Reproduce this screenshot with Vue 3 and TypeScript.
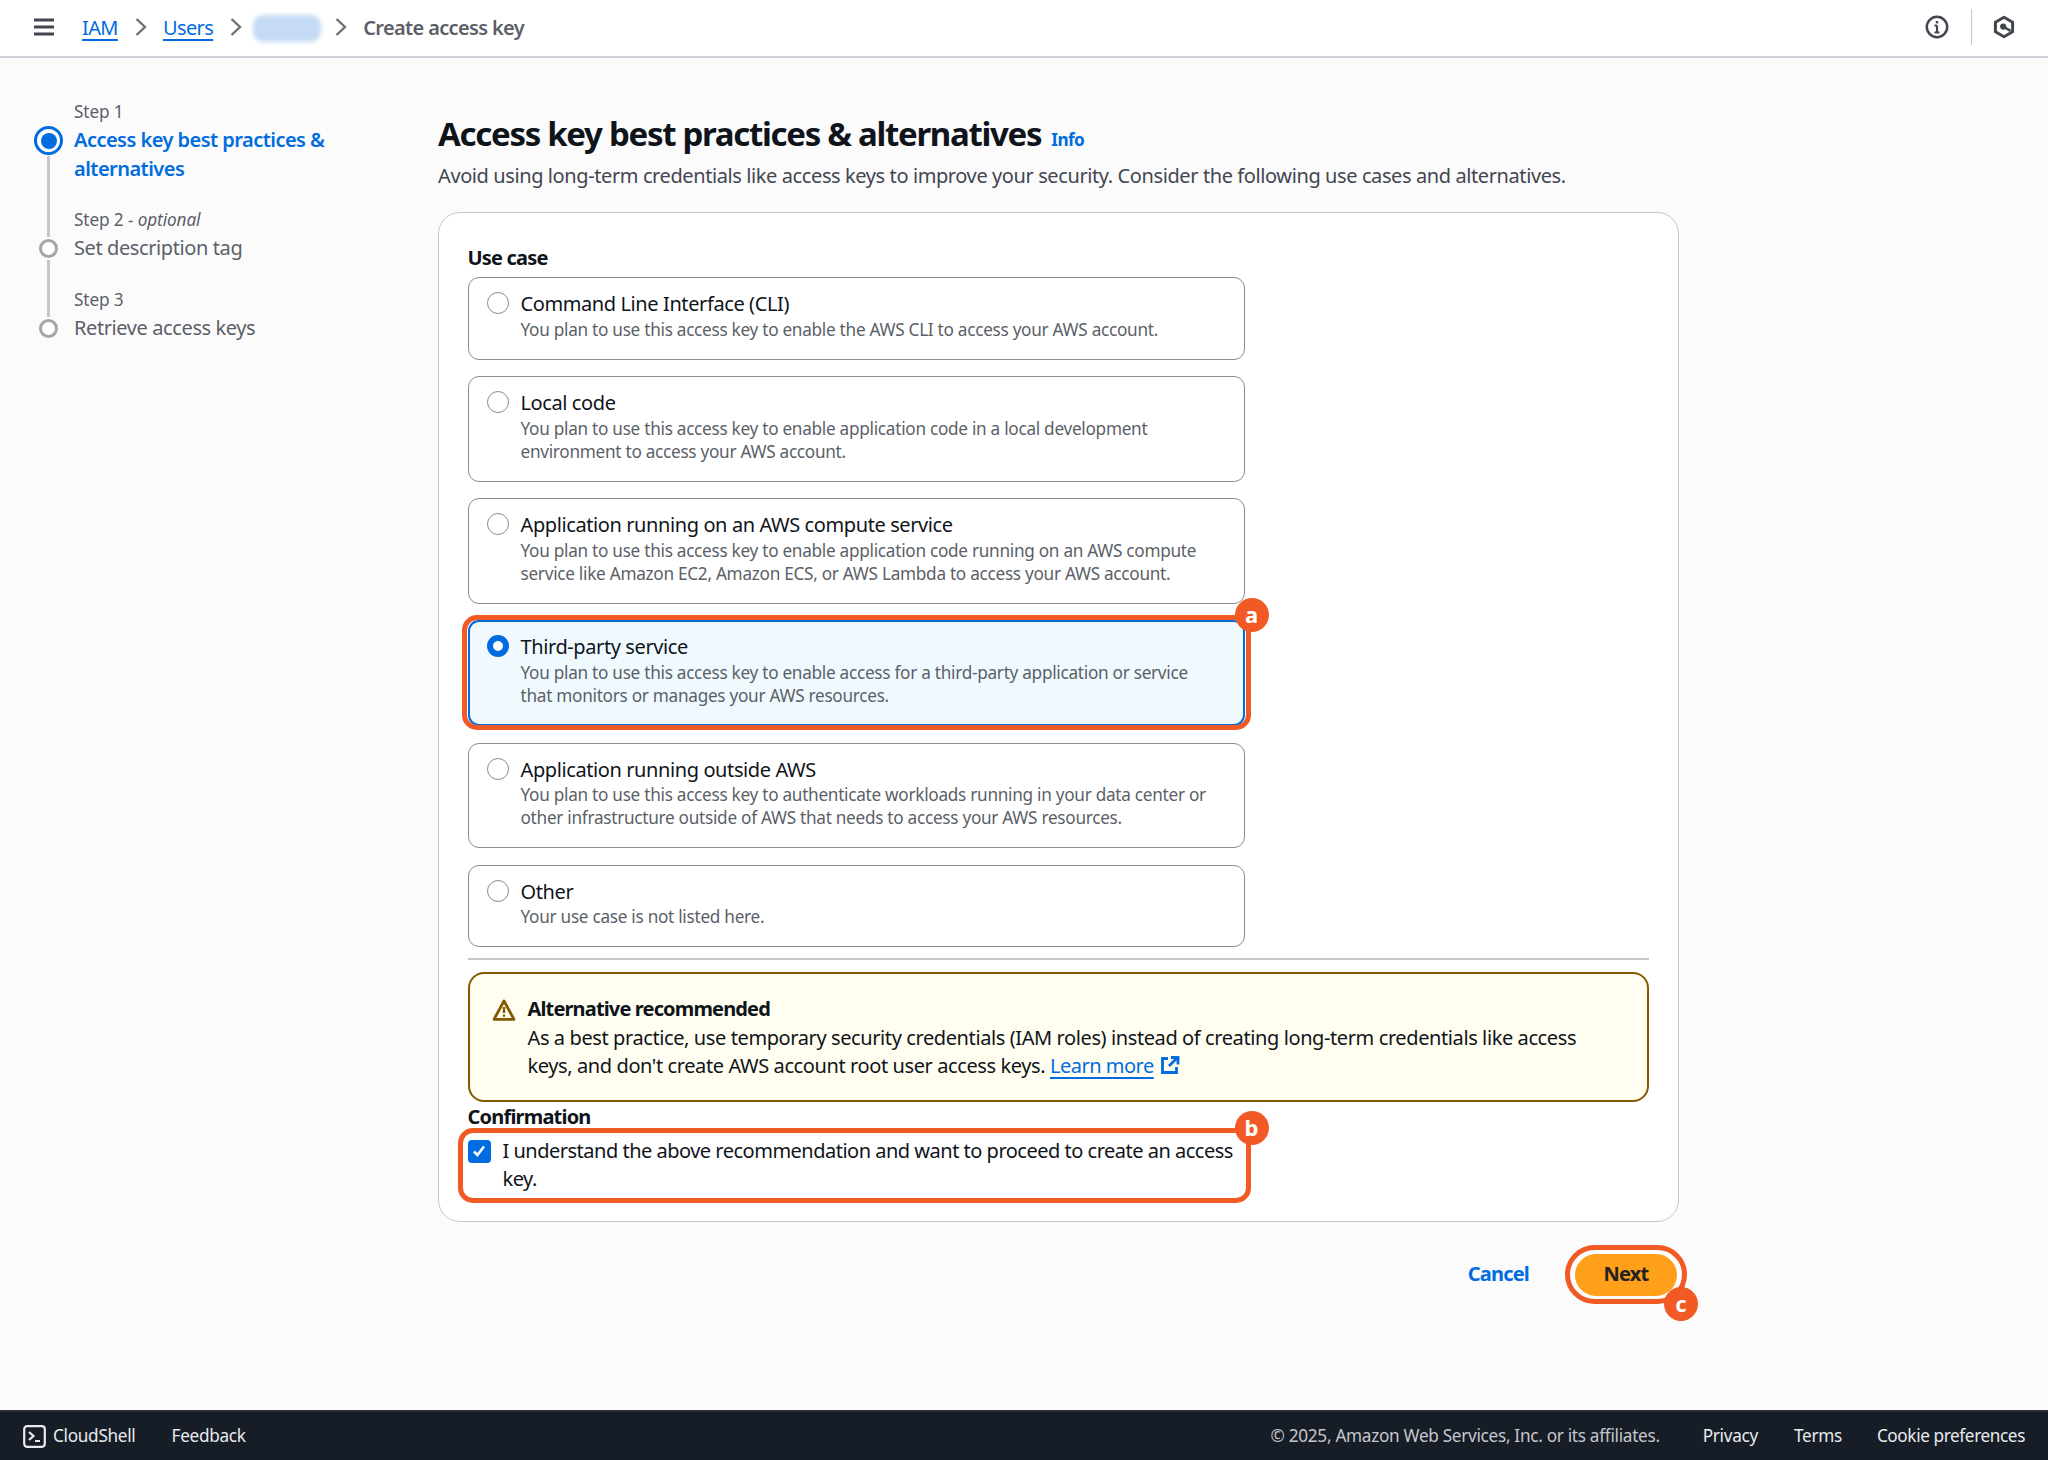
<template>
  <div class="page">
    <header class="topbar">
      <button class="menu" aria-label="Menu">
        <svg width="22" height="18" viewBox="0 0 22 18"><path d="M1 2h20M1 9h20M1 16h20" stroke="#424650" stroke-width="2.8" fill="none" /></svg>
      </button>
      <nav class="crumbs">
        <a class="crumb-link">IAM</a>
        <svg class="chev" width="14" height="20" viewBox="0 0 14 20"><path d="M2.5 2l8.5 8-8.5 8" stroke="#6b6f78" stroke-width="2.4" fill="none" /></svg>
        <a class="crumb-link">Users</a>
        <svg class="chev" width="14" height="20" viewBox="0 0 14 20"><path d="M2.5 2l8.5 8-8.5 8" stroke="#6b6f78" stroke-width="2.4" fill="none" /></svg>
        <span class="blurred"></span>
        <svg class="chev" width="14" height="20" viewBox="0 0 14 20"><path d="M2.5 2l8.5 8-8.5 8" stroke="#6b6f78" stroke-width="2.4" fill="none" /></svg>
        <span class="crumb-current">Create access key</span>
      </nav>
      <div class="top-icons">
        <svg width="24" height="24" viewBox="0 0 24 24">
          <circle cx="12" cy="12" r="10.2" stroke="#424650" stroke-width="2.5" fill="none" />
          <path d="M12 10.5v7M9.5 17.5h5M9.5 10.5H12" stroke="#424650" stroke-width="2.2" fill="none" />
          <path d="M10.8 6h2.4v2.4h-2.4z" fill="#424650" />
        </svg>
        <span class="top-sep"></span>
        <svg width="24" height="24" viewBox="0 0 24 24">
          <path d="M12 2.2l8.6 5v9.6l-8.6 5-8.6-5V7.2z" stroke="#424650" stroke-width="3" fill="none" stroke-linejoin="round" />
          <circle cx="11.2" cy="11.6" r="3.1" fill="#424650" />
          <path d="M12 12l6.5 3.8" stroke="#424650" stroke-width="2.6" fill="none" />
        </svg>
      </div>
    </header>

    <main class="main">
      <aside class="steps">
        <div v-for="(s, i) in steps" :key="s.title" class="step" :class="{ active: i === 0, last: i === steps.length - 1 }">
          <div class="step-label">{{ s.label }}<i v-if="s.optional"> - optional</i></div>
          <div class="step-row">
            <span class="step-dot"></span>
            <span class="step-title">{{ s.title }}</span>
          </div>
        </div>
      </aside>

      <section class="content">
        <div class="title-row">
          <h1>Access key best practices &amp; alternatives</h1>
          <a class="info">Info</a>
        </div>
        <p class="subtitle">Avoid using long-term credentials like access keys to improve your security. Consider the following use cases and alternatives.</p>

        <div class="card">
          <div class="field-label">Use case</div>
          <div class="options">
            <div v-for="o in options" :key="o.title" class="option-wrap">
              <div class="option" :class="{ selected: o.selected }">
                <span class="radio"></span>
                <div>
                  <div class="option-title">{{ o.title }}</div>
                  <div class="option-desc">{{ o.desc }}</div>
                </div>
              </div>
              <template v-if="o.selected">
                <span class="mark mark-a"></span>
                <span class="badge badge-a">a</span>
              </template>
            </div>
          </div>
          <div class="divider"></div>

          <div class="alert">
            <svg class="alert-icon" width="24" height="24" viewBox="0 0 24 24">
              <path d="M12 3L22 21.3H2z" stroke="#855900" stroke-width="2.8" fill="none" stroke-linejoin="round" />
              <path d="M12 9v6M12 16.4v2.4" stroke="#855900" stroke-width="2.4" fill="none" />
            </svg>
            <div>
              <div class="alert-title">Alternative recommended</div>
              <div class="alert-text">As a best practice, use temporary security credentials (IAM roles) instead of creating long-term credentials like access keys, and don't create AWS account root user access keys. <a class="learn">Learn more</a><svg class="ext" width="20" height="20" viewBox="0 0 20 20"><path d="M8 3.5H2.5v14h14V12" stroke="#006ce0" stroke-width="2.8" fill="none" /><path d="M9 11l8-8M11 2.5h7v7" stroke="#006ce0" stroke-width="2.8" fill="none" /></svg></div>
            </div>
          </div>

          <div class="confirm-label">Confirmation</div>
          <div class="confirm">
            <span class="checkbox">
              <svg width="16" height="16" viewBox="0 0 16 16"><path d="M3 8.5l3.4 3.6L13 3.5" stroke="#fff" stroke-width="2.6" fill="none" /></svg>
            </span>
            <span class="confirm-text">I understand the above recommendation and want to proceed to create an access key.</span>
            <span class="mark mark-b"></span>
            <span class="badge badge-b">b</span>
          </div>
        </div>

        <div class="actions">
          <a class="cancel">Cancel</a>
          <div class="next-wrap">
            <button class="next">Next</button>
            <span class="mark mark-c"></span>
            <span class="badge badge-c">c</span>
          </div>
        </div>
      </section>
    </main>

    <footer class="footer">
      <div class="foot-left">
        <span class="shell">
          <svg width="23" height="23" viewBox="0 0 23 23">
            <rect x="1.2" y="1.2" width="20.6" height="20.6" rx="3" stroke="#e8eaee" stroke-width="2.2" fill="none" />
            <path d="M6 7l4.5 4L6 15M12 16h5" stroke="#e8eaee" stroke-width="2.2" fill="none" />
          </svg>
          CloudShell
        </span>
        <span>Feedback</span>
      </div>
      <div class="foot-right">
        <span class="copy">© 2025, Amazon Web Services, Inc. or its affiliates.</span>
        <span class="privacy">Privacy</span>
        <span class="terms">Terms</span>
        <span class="cookies">Cookie preferences</span>
      </div>
    </footer>
  </div>
</template>

<script setup lang="ts">
const steps = [
  { label: 'Step 1', title: 'Access key best practices & alternatives', optional: false },
  { label: 'Step 2', title: 'Set description tag', optional: true },
  { label: 'Step 3', title: 'Retrieve access keys', optional: false },
]

const options = [
  { title: 'Command Line Interface (CLI)', desc: 'You plan to use this access key to enable the AWS CLI to access your AWS account.' },
  { title: 'Local code', desc: 'You plan to use this access key to enable application code in a local development environment to access your AWS account.' },
  { title: 'Application running on an AWS compute service', desc: 'You plan to use this access key to enable application code running on an AWS compute service like Amazon EC2, Amazon ECS, or AWS Lambda to access your AWS account.' },
  { title: 'Third-party service', desc: 'You plan to use this access key to enable access for a third-party application or service that monitors or manages your AWS resources.', selected: true },
  { title: 'Application running outside AWS', desc: 'You plan to use this access key to authenticate workloads running in your data center or other infrastructure outside of AWS that needs to access your AWS resources.' },
  { title: 'Other', desc: 'Your use case is not listed here.' },
]
</script>

<style>
html, body {
  margin: 0;
  background: #fbfbfc;
}
</style>

<style scoped>
.page {
  min-height: 1460px;
  display: flex;
  flex-direction: column;
  font-family: "Noto Sans", "Liberation Sans", sans-serif;
  font-size: 20px;
  line-height: 28.6px;
  color: #0f141a;
  letter-spacing: -0.4px;
}
.topbar {
  height: 58px;
  box-sizing: border-box;
  border-bottom: 2px solid #d1d2d9;
  background: #fff;
  display: flex;
  align-items: center;
  padding: 0 32px 2px 33px;
}
.menu {
  width: 22px;
  height: 18px;
  padding: 0;
  border: none;
  background: none;
  display: flex;
}
.crumbs {
  display: flex;
  align-items: center;
  margin-left: 27px;
  margin-top: 2px;
  font-size: 20px;
  letter-spacing: -0.6px;
}
.crumb-link {
  color: #006ce0;
  text-decoration: underline;
  text-underline-offset: 4px;
}
.chev {
  margin: -2px 15px 0 16px;
}
.blurred {
  width: 68px;
  height: 27px;
  border-radius: 11px;
  background: #c4daf5;
  filter: blur(2px);
  margin-left: -5px;
  margin-right: -3px;
}
.crumb-current {
  color: #5b5f68;
  font-weight: 600;
  margin-left: 0;
  letter-spacing: -0.65px;
}
.top-icons {
  margin-left: auto;
  display: flex;
  align-items: center;
}
.top-sep {
  width: 1px;
  height: 36px;
  background: #c6c6cd;
  margin: 0 20px 0 22px;
}
.main {
  flex: 1;
  display: flex;
  padding-left: 33px;
}
.steps {
  width: 405px;
  flex: none;
  padding-top: 42px;
  box-sizing: border-box;
}
.step {
  position: relative;
  padding-left: 41px;
  padding-bottom: 25px;
}
.step-label {
  font-size: 17.2px;
  line-height: 24px;
  margin-bottom: 2px;
  color: #5b5f68;
  letter-spacing: -0.1px;
}
.step-label i {
  font-style: italic;
}
.step-row {
  display: block;
}
.step-title {
  display: block;
  width: 270px;
  color: #5b5f68;
}
.step-dot {
  position: absolute;
  left: 6px;
  top: 31px;
  width: 19px;
  height: 19px;
  box-sizing: border-box;
  border: 3px solid #a4a6ae;
  border-radius: 50%;
  background: #fff;
  z-index: 1;
}
.step::before {
  content: "";
  position: absolute;
  left: 14px;
  top: 52px;
  bottom: -29px;
  width: 3px;
  background: #c6c6cd;
}
.step.active::before {
  top: 56px;
}
.step.last::before {
  display: none;
}
.step.active .step-title {
  color: #006ce0;
  font-weight: 600;
  letter-spacing: -0.53px;
}
.step.active .step-dot {
  left: 1px;
  top: 26px;
  width: 29px;
  height: 29px;
  border: 3.5px solid #006ce0;
  padding: 3.5px;
  background: #006ce0;
  background-clip: content-box;
}
.content {
  width: 1241px;
}
.title-row {
  display: flex;
  align-items: baseline;
  margin-top: 54px;
  gap: 10px;
}
h1 {
  margin: 0;
  font-size: 33px;
  line-height: 44px;
  font-weight: 700;
  letter-spacing: -1.3px;
}
.info {
  color: #006ce0;
  font-size: 17.2px;
  font-weight: 700;
  letter-spacing: -0.6px;
}
.subtitle {
  margin: 6px 0 0;
  color: #424650;
}
.card {
  margin-top: 21px;
  box-sizing: border-box;
  height: 1010px;
  border: 1.5px solid #c6c6cd;
  border-radius: 22px;
  background: #fff;
  padding: 31px 28.5px 0;
}
.field-label,
.confirm-label {
  font-weight: 700;
  font-size: 20px;
  letter-spacing: -0.8px;
}
.options {
  width: 777px;
  margin-top: 5px;
  display: flex;
  flex-direction: column;
  gap: 16.5px;
}
.option-wrap {
  position: relative;
}
.option {
  display: flex;
  gap: 12px;
  box-sizing: border-box;
  border: 1.5px solid #8c8c94;
  border-radius: 11px;
  padding: 12px 17px 18px 18px;
  background: #fff;
}
.option.selected {
  border: 2.5px solid #006ce0;
  background: #f0fafe;
  padding: 11px 16px 17px 17px;
}
.radio {
  flex: none;
  width: 22px;
  height: 22px;
  box-sizing: border-box;
  margin-top: 2px;
  border: 1.5px solid #8c8c94;
  border-radius: 50%;
  background: #fff;
}
.selected .radio {
  border: 6px solid #006ce0;
}
.option-title {
  line-height: 28.6px;
}
.option-desc {
  max-width: 700px;
  font-size: 17.2px;
  line-height: 23px;
  margin-top: -1px;
  color: #5b5f68;
  letter-spacing: -0.28px;
}
.divider {
  height: 2px;
  background: #c6c6cd;
  margin-top: 11px;
  width: 1181px;
}
.alert {
  margin-top: 12px;
  width: 1181px;
  height: 130px;
  box-sizing: border-box;
  border: 2.5px solid #855900;
  border-radius: 16px;
  background: #fffef0;
  padding: 21px 22px;
  display: flex;
  gap: 12px;
}
.alert-icon {
  flex: none;
  margin-top: 3px;
}
.alert-title {
  font-weight: 700;
  letter-spacing: -0.85px;
}
.alert-text {
  max-width: 1080px;
}
.learn {
  color: #006ce0;
  letter-spacing: -0.5px;
  text-decoration: underline;
  text-underline-offset: 4px;
}
.ext {
  margin-left: 6px;
  vertical-align: -2px;
}
.confirm-label {
  margin-top: 1px;
}
.confirm {
  position: relative;
  width: 777px;
  display: flex;
  gap: 12px;
  margin-top: 5px;
  letter-spacing: -0.5px;
}
.checkbox {
  flex: none;
  width: 23px;
  height: 23px;
  margin-top: 3px;
  border-radius: 4px;
  background: #006ce0;
  display: flex;
  align-items: center;
  justify-content: center;
}
.mark {
  position: absolute;
  border: 5.5px solid #f15a24;
  pointer-events: none;
}
.mark-a {
  inset: -5px -6px -4px -6px;
  border-radius: 15px;
}
.mark-b {
  inset: -9px -6px -9px -10px;
  border-radius: 15px;
}
.mark-c {
  inset: -6.5px -8px;
  border-radius: 30px;
}
.badge {
  position: absolute;
  width: 34px;
  height: 34px;
  border-radius: 50%;
  background: #f15a24;
  color: #fff;
  font-weight: 700;
  font-size: 22px;
  line-height: 32px;
  text-align: center;
  letter-spacing: 0;
}
.badge-a {
  right: -24px;
  top: -22px;
}
.badge-b {
  right: -24px;
  top: -26px;
}
.badge-c {
  right: -19px;
  bottom: -23px;
}
.actions {
  display: flex;
  justify-content: flex-end;
  align-items: center;
  margin-top: 30px;
  gap: 44px;
}
.cancel {
  color: #006ce0;
  font-weight: 700;
  letter-spacing: -0.8px;
}
.next-wrap {
  position: relative;
  display: flex;
}
.next {
  width: 106px;
  height: 46px;
  padding: 0;
  border: 2px solid #fff;
  border-radius: 23px;
  background: #ff9f1a;
  color: #222;
  font: inherit;
  font-weight: 700;
  letter-spacing: -0.8px;
}
.footer {
  height: 50px;
  box-sizing: border-box;
  border-top: 2px solid #2b3038;
  background: #161d26;
  color: #e8eaee;
  font-size: 17.2px;
  letter-spacing: -0.3px;
  display: flex;
  align-items: center;
  justify-content: space-between;
  padding: 0 23px 0 23px;
}
.foot-left,
.foot-right {
  display: flex;
  align-items: center;
}
.shell {
  display: flex;
  align-items: center;
  gap: 7px;
  margin-right: 36px;
}
.foot-right span {
  margin-left: 35px;
}
.foot-right .privacy {
  margin-left: 43px;
}
.foot-right .terms {
  margin-left: 36px;
}
.foot-right .cookies {
  letter-spacing: -0.4px;
}
.foot-right .copy {
  color: #c6c6cd;
}
</style>
